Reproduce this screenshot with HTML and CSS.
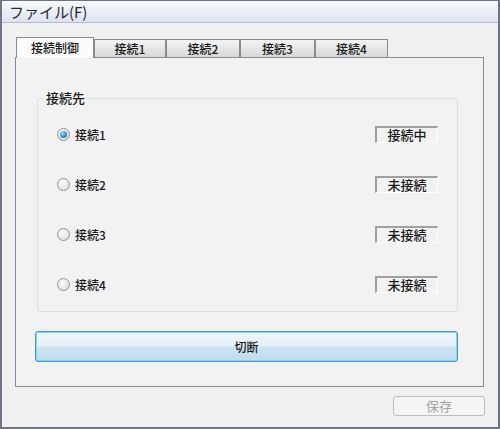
FILE: index.html
```html
<!DOCTYPE html>
<html lang="ja">
<head>
  <meta charset="UTF-8">
  <title>接続制御</title>
  <link rel="stylesheet" href="styles.css">
</head>
<body>

<div class="window">
  <div class="menubar">ファイル(F)</div>

  <div class="main">
    <div class="tabs">
      <div class="tab active" style="width: 78px;">接続制御</div>
      <div class="tab" style="width: 72px;">接続1</div>
      <div class="tab" style="width: 74px;">接続2</div>
      <div class="tab" style="width: 75px;">接続3</div>
      <div class="tab" style="width: 73px;">接続4</div>
    </div>

    <div class="pane">
      <div class="group">
        <span class="legend">接続先</span>

        <div class="row">
          <label class="choice"><span class="radio checked"></span>接続1</label>
          <div class="status">接続中</div>
        </div>
        <div class="row">
          <label class="choice"><span class="radio"></span>接続2</label>
          <div class="status">未接続</div>
        </div>
        <div class="row">
          <label class="choice"><span class="radio"></span>接続3</label>
          <div class="status">未接続</div>
        </div>
        <div class="row">
          <label class="choice"><span class="radio"></span>接続4</label>
          <div class="status">未接続</div>
        </div>
      </div>

      <button class="cut">切断</button>
    </div>

    <div class="footer">
      <button class="save" disabled>保存</button>
    </div>
  </div>
</div>

</body>
</html>
```

FILE: styles.css
```css
body {
  margin: 0;
  font-family: "Noto Sans CJK JP", "Noto Sans", sans-serif;
  color: #1a1a1a;
}

.window {
  width: 500px;
  height: 429px;
  box-sizing: border-box;
  border: 2px solid #6b7789;
  border-top-width: 1px;
  background: #f0f0f0;
}

.menubar {
  height: 21px;
  border-bottom: 1px solid #b6bcc6;
  background: linear-gradient(#f8f9fc, #dce3f1);
  padding-left: 7px;
  font-size: 15px;
  line-height: 21px;
  color: #2a2a2a;
}

.main {
  padding: 14px 14px 0 13px;
}

/* onglets */
.tabs {
  display: flex;
  align-items: flex-end;
  height: 21px;
  margin-left: 1px;
  margin-bottom: -1px;
  position: relative;
  z-index: 1;
}

.tab {
  box-sizing: border-box;
  height: 18px;
  margin-bottom: 1px;
  border: 1px solid #898c95;
  border-bottom: none;
  background: linear-gradient(#f3f3f3, #e6e6e6 50%, #d9d9d9);
  font-size: 12px;
  font-weight: 500;
  line-height: 17px;
  text-align: center;
}

.tab.active {
  height: 21px;
  margin-bottom: 0;
  background: #fcfcfc;
  line-height: 20px;
}

.pane {
  width: 469px;
  height: 330px;
  box-sizing: border-box;
  border: 1px solid #898c95;
  padding: 40px 0 0 19px;
  background: #f2f2f2;
}

/* groupe connexions */
.group {
  position: relative;
  margin-left: 2px;
  width: 421px;
  height: 214px;
  box-sizing: border-box;
  border: 1px solid #d5dfe5;
  border-radius: 3px;
  padding: 10px 19px 0;
}

.legend {
  position: absolute;
  top: -10px;
  left: 6px;
  padding: 0 2px;
  background: #f2f2f2;
  font-size: 13px;
  font-weight: 500;
  line-height: 17px;
}

.row {
  display: flex;
  align-items: center;
  height: 50px;
}

.choice {
  display: flex;
  align-items: center;
  gap: 5px;
  font-size: 12px;
  font-weight: 500;
}

.radio {
  display: flex;
  align-items: center;
  justify-content: center;
  width: 13px;
  height: 13px;
  box-sizing: border-box;
  border: 1px solid #939393;
  border-radius: 50%;
  background: radial-gradient(circle at 40% 35%, #fbfbfb, #d6d6d6);
}

.radio.checked::after {
  content: "";
  width: 7px;
  height: 7px;
  border-radius: 50%;
  background: radial-gradient(circle at 40% 35%, #9fe0ff, #2a8fd6 55%, #164f8e);
}

.status {
  margin-left: auto;
  width: 63px;
  height: 17px;
  box-sizing: border-box;
  border-top: 2px solid #a0a0a0;
  border-left: 2px solid #a0a0a0;
  border-bottom: 1px solid #ffffff;
  border-right: 1px solid #ffffff;
  font-size: 13px;
  font-weight: 500;
  line-height: 14px;
  text-align: center;
}

/* boutons */
.cut {
  display: block;
  margin-top: 19px;
  width: 423px;
  height: 31px;
  border: 1px solid #3c9ad6;
  border-radius: 3px;
  box-shadow: inset 0 0 0 1px #8ed0f2;
  background: linear-gradient(#eef6fb, #e4f0f8 48%, #cce4f1 52%, #bfdcec);
  font-family: inherit;
  font-size: 12px;
  font-weight: 500;
  color: #1a1a1a;
}

.footer {
  display: flex;
  justify-content: flex-end;
  padding-top: 9px;
  margin-right: -1px;
}

.save {
  width: 92px;
  height: 20px;
  border: 1px solid #bfbfbf;
  border-radius: 3px;
  background: #f4f4f4;
  font-family: inherit;
  font-size: 13px;
  line-height: 16px;
  color: #a3a3a3;
  padding: 0;
}
```
